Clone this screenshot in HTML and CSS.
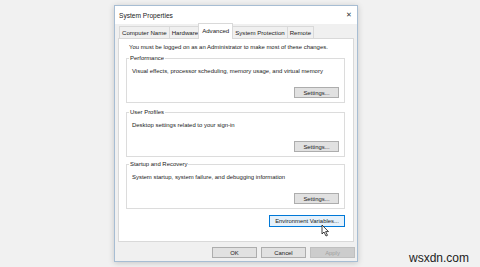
FILE: index.html
```html
<!DOCTYPE html>
<html lang="en">
<head>
    <meta charset="UTF-8">
    <title>System Properties</title>
    <link rel="stylesheet" href="styles.css">
</head>
<body>

    <div class="window">
        <div class="titlebar">
            <span class="title">System Properties</span>
            <span class="close">&#x2715;</span>
        </div>

        <div class="tabs">
            <div class="tab">Computer Name</div>
            <div class="tab">Hardware</div>
            <div class="tab active">Advanced</div>
            <div class="tab">System Protection</div>
            <div class="tab">Remote</div>
        </div>

        <div class="panel">
            <p class="note">You must be logged on as an Administrator to make most of these changes.</p>

            <fieldset class="group">
                <legend>Performance</legend>
                <p>Visual effects, processor scheduling, memory usage, and virtual memory</p>
                <div class="row"><button>Settings...</button></div>
            </fieldset>

            <fieldset class="group">
                <legend>User Profiles</legend>
                <p>Desktop settings related to your sign-in</p>
                <div class="row"><button>Settings...</button></div>
            </fieldset>

            <fieldset class="group">
                <legend>Startup and Recovery</legend>
                <p>System startup, system failure, and debugging information</p>
                <div class="row"><button>Settings...</button></div>
            </fieldset>

            <div class="row env-row">
                <button class="env">Environment Variables...</button>
                <svg class="cursor" width="9" height="13" viewBox="0 0 9 13">
                    <path d="M1 1 L1 10 L3 8 L5 12 L6.5 11.3 L4.6 7.6 L7.5 7.6 Z" fill="#fff" stroke="#111" stroke-width="0.8" stroke-linejoin="round"/>
                </svg>
            </div>
        </div>

        <div class="footer">
            <button>OK</button>
            <button>Cancel</button>
            <button disabled>Apply</button>
        </div>
    </div>

    <div class="watermark">wsxdn.com</div>

</body>
</html>
```

FILE: styles.css
```css
body {
    margin: 0;
    width: 480px;
    height: 267px;
    overflow: hidden;
    background-color: #f1f1f1;
    font-family: "Liberation Sans", Arial, sans-serif;
    color: #1a1a1a;
    position: relative;
}

.window {
    margin: 5px 0 0 114px;
    width: 242px;
    height: 255px;
    border: 1px solid #a7bdd3;
    background-color: #f0f0f0;
    box-shadow: 0 1px 6px rgba(0, 0, 0, 0.18);
    display: flex;
    flex-direction: column;
}

.titlebar {
    height: 18px;
    flex-shrink: 0;
    background-color: #fff;
    display: flex;
    align-items: center;
    justify-content: space-between;
    padding: 0 5px 0 4px;
}

.title {
    font-size: 6.6px;
    color: #222;
}

.close {
    font-size: 7px;
    color: #333;
}

.tabs {
    display: flex;
    align-items: flex-end;
    height: 15px;
    flex-shrink: 0;
    margin: 0 5px 0 4px;
}

.tab {
    font-size: 6.1px;
    height: 12px;
    line-height: 11px;
    padding: 0 2px;
    background-color: #f0f0f0;
    border: 1px solid #d9d9d9;
    border-bottom: none;
    margin-right: -1px;
    white-space: nowrap;
}

.tab.active {
    height: 15px;
    line-height: 13px;
    background-color: #fff;
    position: relative;
    z-index: 1;
    margin: 0 -1px 0 -2px;
    padding: 0 3px;
}

.panel {
    background-color: #fff;
    border: 1px solid #d9d9d9;
    margin: -1px 3px 0 3px;
    height: 204px;
    flex-shrink: 0;
    box-sizing: border-box;
    padding: 5px 8px 0 7px;
}

.note {
    font-size: 5.95px;
    line-height: 7px;
    margin: 0 0 4px 3px;
    white-space: nowrap;
}

.group {
    border: 1px solid #dcdcdc;
    margin: 0 0 6px 0;
    padding: 0 5px 4px 5px;
}

.group + .group + .group {
    margin-top: -2px;
}

.group legend {
    font-size: 5.95px;
    line-height: 7px;
    padding: 0 1px;
    margin-left: -3px;
}

.group p {
    font-size: 5.95px;
    line-height: 7px;
    margin: 6px 0 0 0;
    white-space: nowrap;
}

.row {
    display: flex;
    justify-content: flex-end;
    margin-top: 12px;
}

button {
    font-family: "Liberation Sans", Arial, sans-serif;
    font-size: 5.9px;
    color: #1a1a1a;
    width: 45px;
    height: 11px;
    padding: 0;
    background-color: #e1e1e1;
    border: 1px solid #adadad;
    border-radius: 0;
}

.env-row {
    margin-top: 0;
    position: relative;
}

.env {
    width: 76px;
    height: 12px;
    background-color: #e5f1fb;
    border-color: #0078d7;
}

.cursor {
    position: absolute;
    right: 15px;
    top: 9px;
}

.footer {
    display: flex;
    justify-content: flex-end;
    gap: 4px;
    padding: 5px 2px 0 0;
}

.footer button {
    width: 45px;
    height: 11px;
}

.footer button:disabled {
    color: #a0a0a0;
    background-color: #cccccc;
    border-color: #bfbfbf;
}

.watermark {
    position: absolute;
    right: 11px;
    bottom: 2px;
    font-family: "Liberation Sans", Arial, sans-serif;
    font-size: 12px;
    color: #222;
}
```
